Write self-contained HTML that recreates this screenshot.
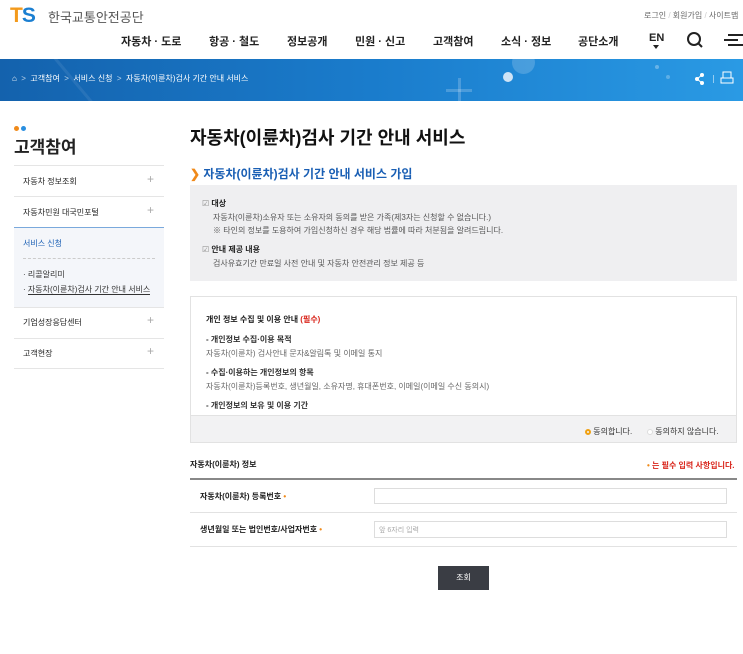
<!DOCTYPE html>
<html><head><meta charset="utf-8"><style>
*{margin:0;padding:0;box-sizing:border-box}
body{width:743px;height:654px;overflow:hidden;background:#fff;font-family:"Liberation Sans","Noto Sans CJK KR",sans-serif;color:#222;position:relative}
.a{position:absolute;white-space:nowrap}
</style></head><body>
<div class="a" style="left:10px;top:4px;font:bold 21px 'Liberation Sans',sans-serif;letter-spacing:-1px"><span style="color:#f39a1c">T</span><span style="color:#1b7fd1">S</span></div>
<div class="a" style="left:48px;top:7px;font-size:13px;color:#555">한국교통안전공단</div>
<div class="a" style="left:644px;top:10px;font-size:8px;color:#666">로그인 <span style="color:#ccc">/</span> 회원가입 <span style="color:#ccc">/</span> 사이트맵</div>
<div class="a" style="top:33px;left:121px;font-size:11px;font-weight:bold;color:#222">자동차 · 도로</div>
<div class="a" style="top:33px;left:209px;font-size:11px;font-weight:bold">항공 · 철도</div>
<div class="a" style="top:33px;left:287px;font-size:11px;font-weight:bold">정보공개</div>
<div class="a" style="top:33px;left:355px;font-size:11px;font-weight:bold">민원 · 신고</div>
<div class="a" style="top:33px;left:433px;font-size:11px;font-weight:bold">고객참여</div>
<div class="a" style="top:33px;left:501px;font-size:11px;font-weight:bold">소식 · 정보</div>
<div class="a" style="top:33px;left:578px;font-size:11px;font-weight:bold">공단소개</div>
<div class="a" style="top:32px;left:649px;font-size:11px;font-weight:bold">EN</div>
<div class="a" style="top:45px;left:653px;width:0;height:0;border-left:3px solid transparent;border-right:3px solid transparent;border-top:4px solid #222"></div>
<svg class="a" style="left:686px;top:31px" width="18" height="18"><circle cx="8" cy="8" r="6" fill="none" stroke="#222" stroke-width="2"/><line x1="12" y1="12" x2="16" y2="16" stroke="#222" stroke-width="2"/></svg>
<svg class="a" style="left:724px;top:33px" width="19" height="14"><line x1="4" y1="2" x2="19" y2="2" stroke="#222" stroke-width="2"/><line x1="0" y1="7" x2="14" y2="7" stroke="#222" stroke-width="2"/><line x1="4" y1="12" x2="19" y2="12" stroke="#222" stroke-width="2"/></svg>
<div class="a" style="left:0;top:59px;width:743px;height:42px;background:linear-gradient(90deg,#1462ad,#1a7ccc 50%,#2a9ae4);overflow:hidden">
<div class="a" style="left:75px;top:-15px;width:3px;height:80px;background:rgba(255,255,255,.08);transform:rotate(-40deg)"></div>
<div class="a" style="left:512px;top:-8px;width:23px;height:23px;border-radius:50%;background:rgba(255,255,255,.18)"></div>
<div class="a" style="left:503px;top:13px;width:10px;height:10px;border-radius:50%;background:#cfe4f6"></div>
<div class="a" style="left:446px;top:30px;width:26px;height:3px;background:rgba(255,255,255,.2)"></div>
<div class="a" style="left:458px;top:19px;width:3px;height:26px;background:rgba(255,255,255,.2)"></div>
<div class="a" style="left:655px;top:6px;width:4px;height:4px;border-radius:50%;background:rgba(255,255,255,.3)"></div>
<div class="a" style="left:666px;top:16px;width:4px;height:4px;border-radius:50%;background:rgba(255,255,255,.25)"></div>
<div class="a" style="left:12px;top:14px;font-size:8px;color:#fff">⌂ &nbsp;<span style="opacity:.7">&gt;</span>&nbsp; 고객참여 &nbsp;<span style="opacity:.7">&gt;</span>&nbsp; 서비스 신청 &nbsp;<span style="opacity:.7">&gt;</span>&nbsp; 자동차(이륜차)검사 기간 안내 서비스</div>
<svg class="a" style="left:695px;top:13px" width="10" height="14"><circle cx="7" cy="3" r="2" fill="#fff"/><circle cx="2" cy="7" r="2" fill="#fff"/><circle cx="7" cy="11" r="2" fill="#fff"/><path d="M7 3L2 7L7 11" stroke="#fff" fill="none"/></svg>
<div class="a" style="left:713px;top:16px;width:1px;height:8px;background:rgba(255,255,255,.5)"></div>
<svg class="a" style="left:720px;top:12px" width="14" height="14"><rect x="3" y="1" width="8" height="6" fill="none" stroke="#fff"/><rect x="1" y="7" width="12" height="5" fill="none" stroke="#fff"/></svg>
</div>
<div class="a" style="left:14px;top:126px;width:5px;height:5px;border-radius:50%;background:#f08a1a"></div>
<div class="a" style="left:21px;top:126px;width:5px;height:5px;border-radius:50%;background:#2a8fe0"></div>
<div class="a" style="left:14px;top:133px;font-size:17px;font-weight:bold">고객참여</div>
<div class="a" style="left:14px;top:165px;width:150px;border-top:1px solid #e5e5e5"></div>
<div class="a" style="left:23px;top:176px;font-size:8px">자동차 정보조회</div><div class="a" style="left:147px;top:172px;font-size:12px;color:#aaa">+</div>
<div class="a" style="left:14px;top:196px;width:150px;border-top:1px solid #e5e5e5"></div>
<div class="a" style="left:23px;top:207px;font-size:8px">자동차민원 대국민포털</div><div class="a" style="left:147px;top:203px;font-size:12px;color:#aaa">+</div>
<div class="a" style="left:14px;top:227px;width:150px;height:80px;border-top:1px solid #7aa9dc;background:#f4f6fa"></div>
<div class="a" style="left:23px;top:238px;font-size:8px;color:#1a5fb4">서비스 신청</div>
<div class="a" style="left:23px;top:258px;width:132px;border-top:1px dashed #ccc"></div>
<div class="a" style="left:23px;top:269px;font-size:8px;color:#333">· 리콜알리미</div>
<div class="a" style="left:23px;top:284px;font-size:8px;color:#333">· <span style="border-bottom:1px solid #333">자동차(이륜차)검사 기간 안내 서비스</span></div>
<div class="a" style="left:14px;top:307px;width:150px;border-top:1px solid #e5e5e5"></div>
<div class="a" style="left:23px;top:317px;font-size:8px">기업성장응답센터</div><div class="a" style="left:147px;top:313px;font-size:12px;color:#aaa">+</div>
<div class="a" style="left:14px;top:338px;width:150px;border-top:1px solid #e5e5e5"></div>
<div class="a" style="left:23px;top:348px;font-size:8px">고객현장</div><div class="a" style="left:147px;top:344px;font-size:12px;color:#aaa">+</div>
<div class="a" style="left:14px;top:368px;width:150px;border-top:1px solid #e5e5e5"></div>
<div class="a" style="left:190px;top:124px;font-size:18px;font-weight:bold;color:#111">자동차(이륜차)검사 기간 안내 서비스</div>
<div class="a" style="left:190px;top:165px;font-size:12px;font-weight:bold;color:#1a5fb4"><span style="color:#f08a1a">❯</span> 자동차(이륜차)검사 기간 안내 서비스 가입</div>
<div class="a" style="left:190px;top:185px;width:547px;height:96px;background:#efeff1"></div>
<div class="a" style="left:202px;top:198px;font-size:8px;font-weight:bold"><span style="color:#888;font-weight:normal">☑</span> 대상</div>
<div class="a" style="left:213px;top:212px;font-size:8px;color:#555">자동차(이륜차)소유자 또는 소유자의 동의를 받은 가족(제3자는 신청할 수 없습니다.)</div>
<div class="a" style="left:213px;top:225px;font-size:8px;color:#555">※ 타인의 정보를 도용하여 가입신청하신 경우 해당 법률에 따라 처분됨을 알려드립니다.</div>
<div class="a" style="left:202px;top:244px;font-size:8px;font-weight:bold"><span style="color:#888;font-weight:normal">☑</span> 안내 제공 내용</div>
<div class="a" style="left:213px;top:258px;font-size:8px;color:#555">검사유효기간 만료일 사전 안내 및 자동차 안전관리 정보 제공 등</div>
<div class="a" style="left:190px;top:296px;width:547px;height:147px;border:1px solid #e2e2e2;overflow:hidden">
<div class="a" style="left:15px;top:17px;font-size:8px;font-weight:bold">개인 정보 수집 및 이용 안내 <span style="color:#d9261c">(필수)</span></div>
<div class="a" style="left:15px;top:37px;font-size:8px;font-weight:bold;color:#333">- 개인정보 수집·이용 목적</div>
<div class="a" style="left:15px;top:51px;font-size:8px;color:#666">자동차(이륜차) 검사안내 문자&amp;알림톡 및 이메일 통지</div>
<div class="a" style="left:15px;top:70px;font-size:8px;font-weight:bold;color:#333">- 수집·이용하는 개인정보의 항목</div>
<div class="a" style="left:15px;top:84px;font-size:8px;color:#666">자동차(이륜차)등록번호, 생년월일, 소유자명, 휴대폰번호, 이메일(이메일 수신 동의시)</div>
<div class="a" style="left:15px;top:103px;font-size:8px;font-weight:bold;color:#333">- 개인정보의 보유 및 이용 기간</div>
<div class="a" style="left:0;top:118px;width:547px;height:29px;background:#f2f2f3;border-top:1px solid #e2e2e2"></div>
<div class="a" style="left:394px;top:129px;font-size:8px;color:#333"><span style="display:inline-block;width:6px;height:6px;border-radius:50%;border:2px solid #f0a010;vertical-align:middle"></span> 동의합니다.</div>
<div class="a" style="left:456px;top:129px;font-size:8px;color:#333"><span style="display:inline-block;width:6px;height:6px;border-radius:50%;border:1px solid #ddd;background:#fff;vertical-align:middle"></span> 동의하지 않습니다.</div>
</div>
<div class="a" style="left:190px;top:459px;font-size:8px;font-weight:bold">자동차(이륜차) 정보</div>
<div class="a" style="left:647px;top:460px;font-size:8px;color:#d9261c;font-weight:bold"><span style="color:#f08a1a">•</span> 는 필수 입력 사항입니다.</div>
<div class="a" style="left:190px;top:478px;width:547px;border-top:2px solid #888"></div>
<div class="a" style="left:200px;top:491px;font-size:8px;font-weight:bold">자동차(이륜차) 등록번호 <span style="color:#f08a1a">•</span></div>
<div class="a" style="left:374px;top:488px;width:353px;height:16px;border:1px solid #ddd"></div>
<div class="a" style="left:190px;top:512px;width:547px;border-top:1px solid #e2e2e2"></div>
<div class="a" style="left:200px;top:524px;font-size:8px;font-weight:bold">생년월일 또는 법인번호/사업자번호 <span style="color:#f08a1a">•</span></div>
<div class="a" style="left:374px;top:521px;width:353px;height:17px;border:1px solid #ddd;font-size:7px;color:#aaa;padding:3px 4px">앞 6자리 입력</div>
<div class="a" style="left:190px;top:546px;width:547px;border-top:1px solid #e2e2e2"></div>
<div class="a" style="left:438px;top:566px;width:51px;height:24px;background:#3a3d44;color:#fff;font-size:8px;text-align:center;line-height:24px">조회</div>
</body></html>
